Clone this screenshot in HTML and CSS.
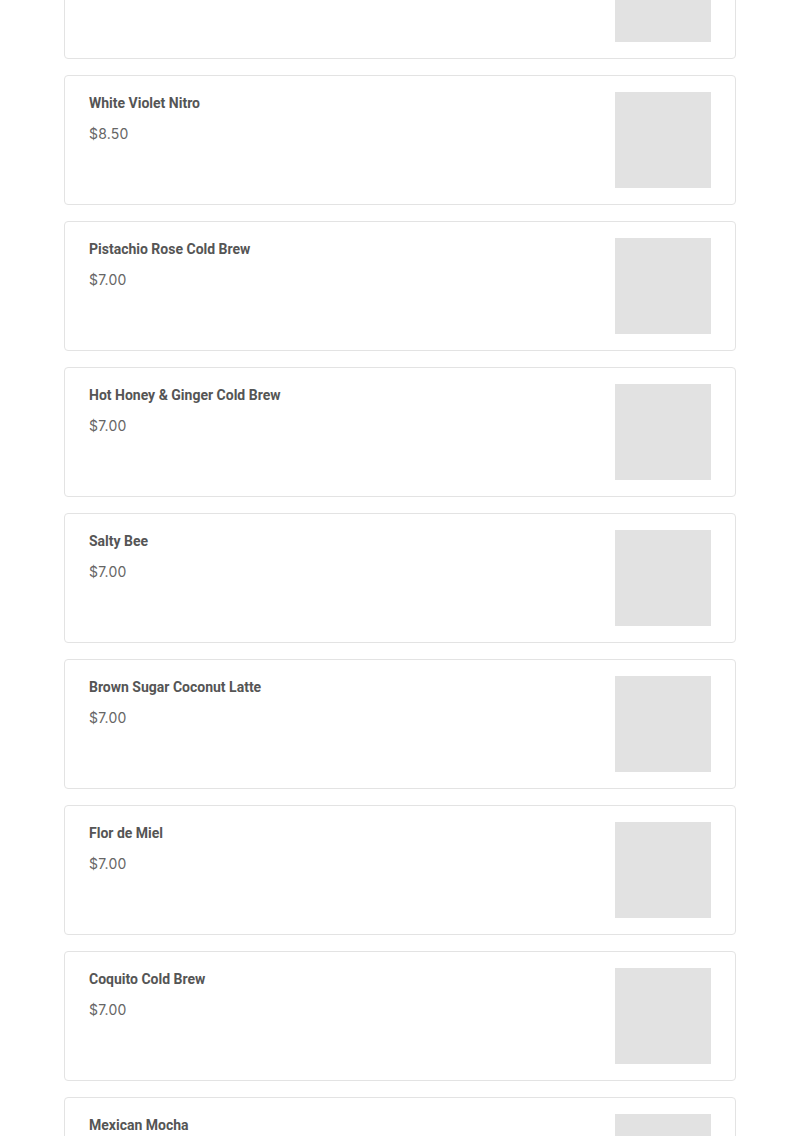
FILE: index.html
```html
<!DOCTYPE html>
<html>
<head>
<meta charset="utf-8">
<link rel="stylesheet" href="styles.css">
</head>
<body>
<div class="list">
  <div class="card"><div class="info"></div><div class="thumb"></div></div>
  <div class="card"><div class="info"><div class="title">White Violet Nitro</div><div class="price">$8.50</div></div><div class="thumb"></div></div>
  <div class="card"><div class="info"><div class="title">Pistachio Rose Cold Brew</div><div class="price">$7.00</div></div><div class="thumb"></div></div>
  <div class="card"><div class="info"><div class="title">Hot Honey &amp; Ginger Cold Brew</div><div class="price">$7.00</div></div><div class="thumb"></div></div>
  <div class="card"><div class="info"><div class="title">Salty Bee</div><div class="price">$7.00</div></div><div class="thumb"></div></div>
  <div class="card"><div class="info"><div class="title">Brown Sugar Coconut Latte</div><div class="price">$7.00</div></div><div class="thumb"></div></div>
  <div class="card"><div class="info"><div class="title">Flor de Miel</div><div class="price">$7.00</div></div><div class="thumb"></div></div>
  <div class="card"><div class="info"><div class="title">Coquito Cold Brew</div><div class="price">$7.00</div></div><div class="thumb"></div></div>
  <div class="card"><div class="info"><div class="title">Mexican Mocha</div></div><div class="thumb"></div></div>
</div>
</body>
</html>
```
FILE: styles.css
```css
html, body {
  margin: 0;
  padding: 0;
  background: #fff;
  overflow: hidden;
}
body {
  font-family: Roboto, "Liberation Sans", sans-serif;
  color: #555;
}
.list {
  width: 672px;
  margin: -71px auto 0;
  display: flex;
  flex-direction: column;
  gap: 16px;
}
.card {
  box-sizing: border-box;
  height: 130px;
  border: 1px solid #e3e3e3;
  border-radius: 4px;
  padding: 16px 24px;
  display: flex;
  justify-content: space-between;
  align-items: flex-start;
}
.info {
  display: flex;
  flex-direction: column;
}
.title {
  font-size: 14px;
  font-weight: 700;
  line-height: 20px;
  margin-top: 1px;
  color: #555;
}
.price {
  font-family: Inter, Roboto, sans-serif;
  font-size: 14px;
  line-height: 20px;
  margin-top: 11px;
  letter-spacing: 0.2px;
  color: #666;
}
.thumb {
  width: 96px;
  height: 96px;
  background: #e2e2e2;
  flex-shrink: 0;
}
```
